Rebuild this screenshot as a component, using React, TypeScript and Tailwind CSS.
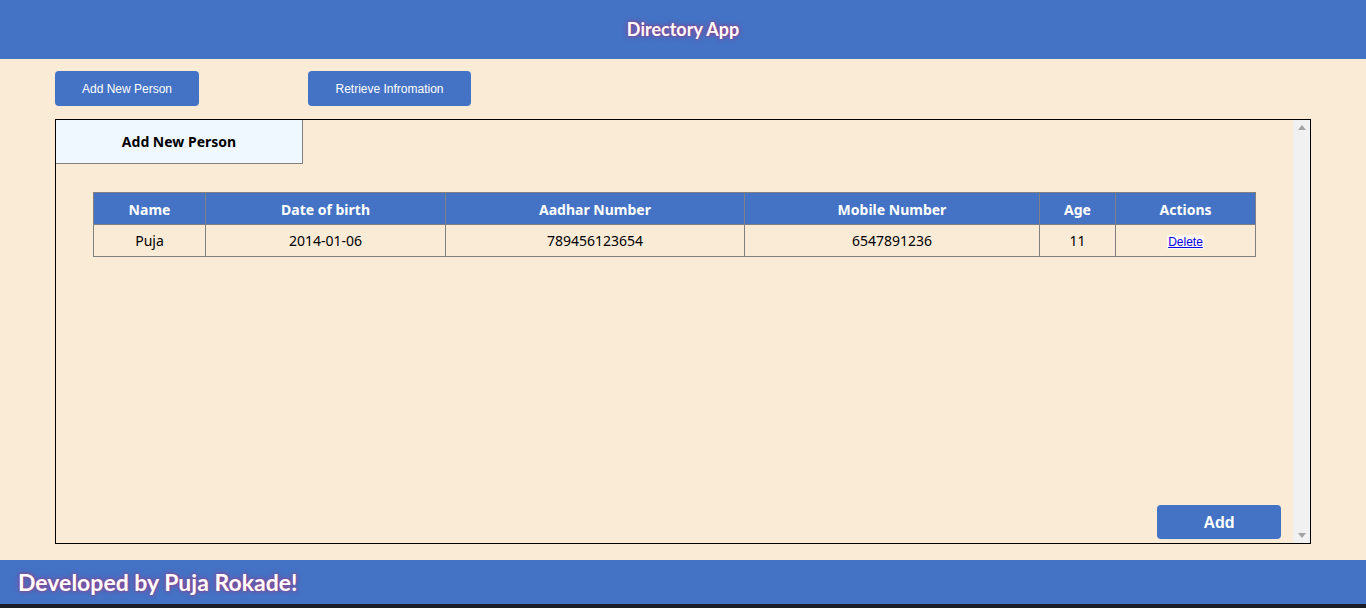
import React from 'react';

interface Person {
    name: string;
    dob: string;
    aadhar: string;
    mobile: string;
    age: number;
}

const people: Person[] = [
    { name: 'Puja', dob: '2014-01-06', aadhar: '789456123654', mobile: '6547891236', age: 11 },
];

const cols = [
    { label: 'Name', w: 'w-[112px]' },
    { label: 'Date of birth', w: 'w-[240px]' },
    { label: 'Aadhar Number', w: 'w-[299px]' },
    { label: 'Mobile Number', w: 'w-[295px]' },
    { label: 'Age', w: 'w-[76px]' },
    { label: 'Actions', w: 'w-[140px]' },
];

const glow = '[text-shadow:0_0_5px_#9c3b86,0_0_2px_#9c3b86]';

export default function App() {
    return (
        <div className="flex flex-col w-[1366px] h-[608px] bg-[#faebd7] font-['Lato','Noto_Sans',sans-serif] overflow-hidden">
            <header className="flex items-center justify-center h-[59px] bg-[#4472c4] shrink-0">
                <h1 className={`text-white font-bold text-[18px] ${glow}`}>Directory App</h1>
            </header>

            <main className="flex flex-col flex-1 px-[55px]">
                <div className="flex gap-[109px] pt-[12px] pb-[13px]">
                    <button className="w-[144px] h-[35px] rounded-[4px] bg-[#4472c4] text-white text-[12px] font-['Liberation_Sans',Arial,sans-serif]">
                        Add New Person
                    </button>
                    <button className="w-[163px] h-[35px] rounded-[4px] bg-[#4472c4] text-white text-[12px] font-['Liberation_Sans',Arial,sans-serif]">
                        Retrieve Infromation
                    </button>
                </div>

                <section className="flex w-[1256px] h-[425px] border border-black">
                    <div className="flex flex-col flex-1 font-['Noto_Sans',sans-serif]">
                        <div className="flex items-center justify-center w-[247px] h-[44px] shrink-0 bg-[#f0f8ff] border-r border-b border-[#808080] text-[14px] font-bold text-black">
                            Add New Person
                        </div>

                        <div className="flex justify-center pt-[28px]">
                            <table className="border-collapse text-[14px]">
                                <thead>
                                    <tr className="bg-[#4472c4] text-white h-[32px]">
                                        {cols.map((c) => (
                                            <th key={c.label} className={`${c.w} border border-[#808080] font-bold pt-[2px]`}>{c.label}</th>
                                        ))}
                                    </tr>
                                </thead>
                                <tbody>
                                    {people.map((p) => (
                                        <tr key={p.aadhar} className="h-[32px] text-black text-center">
                                            <td className="border border-[#808080]">{p.name}</td>
                                            <td className="border border-[#808080]">{p.dob}</td>
                                            <td className="border border-[#808080]">{p.aadhar}</td>
                                            <td className="border border-[#808080]">{p.mobile}</td>
                                            <td className="border border-[#808080]">{p.age}</td>
                                            <td className="border border-[#808080]">
                                                <a href="#" className="text-[12px] text-[#0000ee] underline font-['Liberation_Sans',Arial,sans-serif] bg-[#fdf6ee] px-[1px]">
                                                    Delete
                                                </a>
                                            </td>
                                        </tr>
                                    ))}
                                </tbody>
                            </table>
                        </div>

                        <div className="flex-1" />
                        <div className="flex justify-end pr-[12px] pb-[4px]">
                            <button className="w-[124px] h-[34px] pt-[2px] rounded-[4px] bg-[#4472c4] text-white text-[16px] font-bold font-['Liberation_Sans',Arial,sans-serif]">
                                Add
                            </button>
                        </div>
                    </div>

                    <div className="flex flex-col justify-between items-center w-[17px] bg-[#f1f1f1] py-[5px]">
                        <svg width="8" height="5" viewBox="0 0 8 5"><path d="M4 0L8 5H0z" fill="#a3a3a3" /></svg>
                        <svg width="8" height="5" viewBox="0 0 8 5"><path d="M0 0h8L4 5z" fill="#a3a3a3" /></svg>
                    </div>
                </section>
            </main>

            <footer className="flex items-center h-[44px] shrink-0 bg-[#4472c4] px-[18px]">
                <p className={`text-white font-bold text-[23px] ${glow}`}>Developed by Puja Rokade!</p>
            </footer>
            <div className="h-[4px] shrink-0 bg-[#1b1d26]" />
        </div>
    );
}
